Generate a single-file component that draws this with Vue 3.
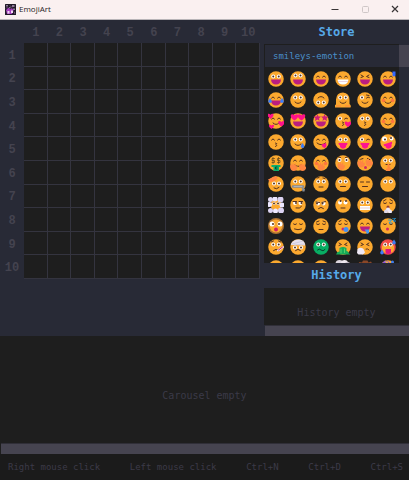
<script setup>
const lines = [1, 2, 3, 4, 5, 6, 7, 8, 9, 10]
const shortcuts = ['Right mouse click', 'Left mouse click', 'Ctrl+N', 'Ctrl+D', 'Ctrl+S']

// Every emoji is drawn on a 32 x 32 canvas from shared parts.
const stroke = (d, color = '#54311f', width = 2) =>
  `<path d="${d}" fill="none" stroke="${color}" stroke-width="${width}" stroke-linecap="round" stroke-linejoin="round"/>`
const fill = (d, color) => `<path d="${d}" fill="${color}"/>`
const dot = (x, y, r, color) => `<circle cx="${x}" cy="${y}" r="${r}" fill="${color}"/>`
const heart = (x, y, s, color = '#ff1289') =>
  `<path transform="translate(${x} ${y}) scale(${s})" d="M0 4C-9-2-4-7 0-3C4-7 9-2 0 4Z" fill="${color}"/>`
const eye = (x, y, px = x, py = y, r = 4) => dot(x, y, r, '#fff') + dot(px, py, 2, '#54311f')

const face = dot(16, 16, 15.5, '#fca92f')
const eyes = eye(10.5, 11) + eye(21.5, 11)
const happy = stroke('M7 12Q10 7 13 12M19 12Q22 7 25 12')
const closed = stroke('M7 12Q10 15 13 12M19 12Q22 15 25 12')
const squint = stroke('M8 8L13 11L8 13M24 8L19 11L24 13')
const flat = stroke('M7 12H13M19 12H25')
const wink = eye(10, 11) + stroke('M19 12Q22 8 25 11')
const grin = fill('M6 17H26Q25 27 16 27Q7 27 6 17Z', '#bb1d80')
const smile = stroke('M10 20Q16 26 22 20')
const kiss = stroke('M15 18Q20 19 16 21Q20 23 15 25')
const blush = dot(7, 17, 3.5, '#ff763f') + dot(25, 17, 3.5, '#ff763f')
const line = stroke('M11 21H21')
const frown = stroke('M11 23Q16 18 21 23')
const tongue = fill('M7 18H25Q24 23 22 23V26Q16 33 10 26V23Q7 22 7 18Z', '#ff148f')
const hand = (x, y) => `<path transform="translate(${x} ${y})" d="M0 0L2-5L4-1L6-7L8-1L11-6L12 1L15 0Q15 9 8 10Q0 10 0 0Z" fill="#ff8542"/>`
const tear = (x, y) => `<path transform="translate(${x} ${y})" d="M0-5Q7 4 0 5Q-7 4 0-5Z" fill="#3f7df4"/>`

const emojis = [
  { name: 'grinning', art: face + eyes + grin },
  { name: 'grinning big eyes', art: face + eye(11, 9) + eye(21, 9) + grin },
  { name: 'smiling eyes', art: face + happy + grin },
  { name: 'beaming', art: face + happy + fill('M5 17H27Q26 27 16 27Q6 27 5 17Z', '#fff') + stroke('M7 21H25', '#d5a6c2', 1) },
  { name: 'squinting', art: face + squint + grin },
  { name: 'sweat smile', art: face + happy + grin + fill('M25 1H31V9Q28 13 25 9Z', '#3469ff') },

  { name: 'tears of joy', art: face + happy + grin + tear(4, 17) + tear(28, 17) },
  { name: 'slight smile', art: face + eyes + smile },
  { name: 'upside down', art: face + eye(10.5, 21) + eye(21.5, 21) + stroke('M10 12Q16 6 22 12') },
  { name: 'melting', art: fill('M2 25V15Q3 1 16 1Q29 2 29 16V24Q33 27 31 31H0Q-2 27 2 25Z', '#fca92f') + stroke('M3 28H11M21 28H29', '#ff853c') + eyes + smile },
  { name: 'winking', art: face + wink + stroke('M19 6L24 7') + smile },
  { name: 'blushing', art: face + happy + blush + smile },

  { name: 'smiling hearts', art: face + happy + smile + heart(5, 7, 1.2) + heart(27, 22, 1.3) + heart(7, 28, 1) },
  { name: 'heart eyes', art: face + heart(9, 9, 1.5) + heart(23, 9, 1.5) + grin },
  { name: 'star struck', art: face + fill('M9 2L11 7L16 7L12 11L13 16L9 13L4 16L5 11L1 7L7 7Z M23 2L25 7L31 7L27 11L28 16L23 13L19 16L20 11L16 7L21 7Z', '#d01d79') + grin },
  { name: 'blowing a kiss', art: face + wink + kiss + heart(26, 23, 1.3) },
  { name: 'kissing', art: face + eyes + kiss },
  { name: 'smiling', art: face + happy + blush + stroke('M10 22Q16 27 22 22') },

  { name: 'kissing smiling eyes', art: face + happy + kiss },
  { name: 'smiling with tear', art: face + eyes + smile + tear(25, 23) },
  { name: 'savoring', art: face + happy + stroke('M8 18Q16 25 25 18') + fill('M17 21L26 18Q29 26 23 28Q18 27 17 21Z', '#ff148f') },
  { name: 'tongue', art: face + eyes + tongue },
  { name: 'winking tongue', art: face + wink + tongue },
  { name: 'zany', art: face + eye(9, 10, 10, 11, 5) + eye(23, 9, 22, 8, 4) + `<g transform="rotate(-18 16 20)">${tongue}</g>` },

  { name: 'money mouth', art: face + stroke('M13 7H8V11H13V15H8M10 5V17M24 7H19V11H24V15H19M21 5V17', '#684b1e', 1.5) + fill('M7 20H25V24H22V32H11V24H7Z', '#0eae6b') + stroke('M18 24H15V28H18', '#064f39') },
  { name: 'hugging', art: face + happy + smile + hand(0, 22) + hand(18, 22) },
  { name: 'hand over mouth', art: face + happy + blush + hand(9, 21) },
  { name: 'open eyes hand', art: face + eye(9, 10) + eye(23, 10) + hand(5, 20) + stroke('M7 4L11 5M21 5L25 4') },
  { name: 'peeking', art: face + stroke('M6 9L12 7M21 7L27 10') + hand(1, 15) + hand(17, 13) + dot(17, 25, 3, '#d12a62') },
  { name: 'shushing', art: face + eyes + stroke('M12 19H20') + fill('M15 18H19V24L23 27L20 32H12V27H15Z', '#ff853c') },

  { name: 'salute', art: face + eye(12, 15) + eye(22, 15) + stroke('M12 24Q17 28 22 23') + fill('M0 7L16 0L19 5L13 10L4 12Z', '#ff8542') },
  { name: 'zipper', art: face + eyes + stroke('M6 21H26', '#828996', 5) + stroke('M8 21H24', '#d8dce2', 1) + fill('M23 22L30 26L29 31H25Z', '#858c98') },
  { name: 'raised brow', art: face + eyes + stroke('M8 4L12 3M20 4L24 5') + stroke('M12 22H20') },
  { name: 'neutral', art: face + eyes + line },
  { name: 'expressionless', art: face + flat + line },
  { name: 'no mouth', art: face + eyes },

  { name: 'in clouds', art: dot(16, 16, 11, '#fca92f') + dot(5, 5, 5, '#e2daf5') + dot(14, 4, 5, '#eee8ff') + dot(25, 5, 6, '#ddd4f3') + dot(3, 15, 5, '#eee8ff') + dot(28, 16, 5, '#eee8ff') + dot(5, 27, 5, '#ddd4f3') + dot(15, 28, 5, '#eee8ff') + dot(26, 27, 6, '#ddd4f3') + eye(12, 13, 12, 13, 3) + eye(20, 13, 20, 13, 3) },
  { name: 'smirking', art: face + eye(10, 12, 12, 12) + eye(21, 12, 23, 12) + stroke('M6 9H13M18 9H25') + stroke('M12 22Q20 24 23 19') },
  { name: 'unamused', art: face + eye(10, 13, 8, 13) + eye(21, 13, 19, 13) + stroke('M6 10L13 11M18 11L25 9') + frown },
  { name: 'rolling eyes', art: face + eye(10, 11, 11, 8) + eye(21, 11, 22, 8) + stroke('M12 22H20') },
  { name: 'grimacing', art: face + eyes + fill('M6 18H26V26H6Z', '#fff') + stroke('M7 22H25', '#c799a0', 1) },
  { name: 'exhaling', art: face + stroke('M7 8L12 5M20 5L25 8') + closed + dot(16, 20, 3, '#943a2c') + dot(16, 25, 4, '#eee9fb') + dot(12, 29, 4, '#ddd9ec') + dot(20, 29, 4, '#eee9fb') },

  { name: 'shaking', art: dot(16, 16, 16, '#ac7132') + dot(16, 16, 13, '#fca92f') + eye(8, 12, 10, 12, 5) + eye(24, 12, 22, 12, 5) + dot(16, 23, 4, '#d21d66') },
  { name: 'relieved', art: face + closed + stroke('M9 22Q16 25 23 22') },
  { name: 'pensive', art: face + closed + stroke('M7 8L12 6M20 6L25 8') + stroke('M12 23H20') },
  { name: 'sleepy', art: face + closed + stroke('M8 7L12 5M20 5L24 7') + dot(16, 22, 3, '#d22767') + dot(22, 23, 5, '#438ff2') },
  { name: 'drooling', art: face + happy + grin + fill('M15 23H24V30Q19 34 18 27Z', '#4798ee') },
  { name: 'sleeping', art: face + closed + dot(15, 22, 3, '#d22767') + stroke('M17 4H23L18 10H24M25 0H31L26 6H32', '#289fe0', 2) },

  { name: 'thermometer', art: face + eyes + stroke('M6 6L11 4M21 4L26 6') + frown + stroke('M20 23L30 16', '#e8e4f0', 4) + stroke('M21 22L29 16', '#d52767', 2) },
  { name: 'bandage', art: face + eye(10, 17) + eye(22, 17) + frown + fill('M2 9Q8 0 19 1Q27 2 30 9V13L2 12Z', '#e7e2ef') + stroke('M4 10L27 4M8 12L29 10', '#bbb5c6', 1) },
  { name: 'nauseated', art: dot(16, 16, 15.5, '#08ad63') + eyes + stroke('M9 22Q13 18 16 22Q20 26 24 21', '#06432f') },
  { name: 'vomiting', art: face + squint + fill('M9 18Q16 14 23 18V24Q27 24 27 28L31 31H2L5 26L9 25Z', '#16ad58') + stroke('M12 20V28M19 20V27', '#57d06b') },
  { name: 'sneezing', art: face + squint + stroke('M18 20Q22 18 24 22') + fill('M1 20Q7 15 13 20L16 27L12 31H3L0 28Z', '#efe9f5') },
  { name: 'hot', art: dot(16, 16, 15.5, '#f24b48') + fill('M4 13H28V19Q28 28 16 29Q4 28 4 19Z', '#fca92f') + eyes + fill('M11 20H22V27Q16 33 11 27Z', '#e0137e') + tear(28, 6) + tear(4, 26) },

  { name: 'cold', art: face + eyes },
  { name: 'woozy', art: face + eyes },
  { name: 'dizzy', art: face + eyes },
  { name: 'exploding', art: dot(9, 8, 8, '#ddd6df') + dot(19, 7, 7, '#eee8ef') + dot(25, 10, 6, '#c9bfca') },
  { name: 'cowboy', art: fill('M0 10L5 4L10 5L12 1H21L23 5L28 3L32 10Z', '#8a4728') },
  { name: 'partying', art: face + fill('M0 10L10 1L19 4L16 12Z', '#8652df') + fill('M9 2L17 4L14 8Z', '#eeb642') + dot(25, 4, 3, '#3d7bec') }
]
</script>

<template>
  <div class="window">
    <header class="titlebar">
      <svg class="logo" viewBox="0 0 22 22" aria-hidden="true">
        <rect width="22" height="22" rx="1" fill="#201a26" />
        <path d="M2 2H6V5H2ZM14 2H19V6H14ZM8 6H11V9H8ZM16 9H20V12H16Z" fill="#8d7895" />
        <path d="M2 12L7 7L10 11L14 8L17 13L14 20H4Z" fill="#a63fc0" />
        <path d="M5 14H9V19H5ZM12 13H16V18H12Z" fill="#f1d7f3" />
        <path d="M10 3L14 7M2 9L5 6M18 15L20 20" stroke="#c48acb" stroke-width="1" />
      </svg>
      <span class="title">EmojiArt</span>
      <button class="control" aria-label="Minimize">
        <svg viewBox="0 0 8 8"><path d="M0.500 4.500H7.500" stroke="#383435" /></svg>
      </button>
      <button class="control" aria-label="Maximize" disabled>
        <svg viewBox="0 0 8 8"><rect x="1.500" y="1.500" width="6" height="6" rx="1" fill="none" stroke="#cfc7c7" /></svg>
      </button>
      <button class="control" aria-label="Close">
        <svg viewBox="0 0 8 8"><path d="M1 1L7 7M7 1L1 7" stroke="#383435" stroke-width="1.2" /></svg>
      </button>
    </header>

    <main class="workspace">
      <section class="board">
        <span class="corner"></span>
        <span v-for="col in lines" :key="col" class="label">{{ col }}</span>
        <template v-for="row in lines" :key="row">
          <span class="label">{{ row }}</span>
          <button v-for="col in lines" :key="col" class="cell" :aria-label="`Row ${row}, column ${col}`"></button>
        </template>
      </section>

      <aside class="side">
        <h2 class="heading">Store</h2>
        <div class="store">
          <div class="catalog">
            <h3 class="category">smileys-emotion</h3>
            <div class="emojis">
              <button v-for="emoji in emojis" :key="emoji.name" class="emoji" :aria-label="emoji.name">
                <svg viewBox="0 0 32 32"><g v-html="emoji.art"></g></svg>
              </button>
            </div>
          </div>
          <div class="track"><div class="thumb"></div></div>
        </div>
        <h2 class="heading history-heading">History</h2>
        <div class="history">
          <p class="empty">History empty</p>
        </div>
        <div class="bar"></div>
      </aside>
    </main>

    <section class="carousel">
      <p class="empty">Carousel empty</p>
    </section>
    <div class="bar"></div>

    <footer class="footer">
      <span v-for="shortcut in shortcuts" :key="shortcut">{{ shortcut }}</span>
    </footer>
  </div>
</template>

<style>
body {
  margin: 0;
  background: #1e1e1e;
}
</style>

<style scoped>
.window {
  display: flex;
  flex-direction: column;
  min-height: 100vh;
  background: #1e1e1e;
  color: #3b3a48;
  font-family: "DejaVu Sans Mono", "Liberation Mono", monospace;
}
button {
  padding: 0;
  border: 0;
  background: none;
}
h2,
h3,
p {
  margin: 0;
}
svg {
  display: block;
}
.titlebar {
  display: flex;
  align-items: center;
  box-sizing: border-box;
  height: 20px;
  padding: 0 3px 1px 5px;
  border-bottom: 1px solid #b9b5b8;
  background: #faf0f0;
}
.logo {
  width: 11px;
  height: 11px;
}
.title {
  flex: 1;
  margin-left: 3px;
  color: #262324;
  font: 8px/12px "Open Sans", sans-serif;
}
.control {
  display: grid;
  place-items: center;
  width: 22px;
  height: 18px;
  margin-left: 8px;
}
.control svg {
  width: 8px;
  height: 8px;
}
.workspace {
  display: grid;
  grid-template-columns: minmax(0, 1fr) 145px;
  background: #282a36;
}
.board {
  display: grid;
  grid-template-columns: 24px repeat(10, minmax(0, 1fr));
  grid-template-rows: 23px;
  align-content: start;
  padding-right: 4px;
}
.label {
  display: grid;
  place-items: center;
  padding-top: 2px;
  color: #44434f;
  font: bold 12px/14px "Liberation Mono", monospace;
}
.cell {
  aspect-ratio: 1;
  border-right: 1px solid #34343f;
  border-bottom: 1px solid #34343f;
  background: #1e1e1e;
}
.side {
  display: flex;
  flex-direction: column;
}
.heading {
  height: 24px;
  color: #56a9e8;
  font-size: 12px;
  line-height: 24px;
  text-align: center;
}
.history-heading {
  height: 25px;
}
.store {
  display: flex;
  height: 219px;
}
.catalog {
  flex: 1;
  overflow: hidden;
  border-left: 1px solid #1e1e1e;
  background: #1e1e1e;
}
.category {
  height: 22px;
  margin-top: 1px;
  padding-left: 8px;
  background: #282a36;
  color: #4a8fc9;
  font-size: 9px;
  font-weight: normal;
  line-height: 22px;
}
.emojis {
  display: grid;
  grid-template-columns: repeat(6, 1fr);
  grid-auto-rows: 21px;
  padding-top: 1px;
}
.emoji {
  display: grid;
  place-items: center;
}
.emoji svg {
  width: 16px;
  height: 16px;
}
.track {
  width: 10px;
  padding-top: 1px;
}
.thumb {
  height: 22px;
  background: #464450;
}
.history,
.carousel {
  display: grid;
  place-items: center;
  background: #1e1e1e;
}
.history {
  height: 37px;
  padding-top: 0;
}
.history .empty {
  padding-top: 12px;
}
.carousel {
  flex: 1;
  padding-top: 12px;
}
.empty {
  font-size: 10px;
  line-height: 12px;
}
.bar {
  height: 10px;
  margin-left: 1px;
  border-top: 1px solid #302f38;
  background: #464450;
}
.footer {
  display: flex;
  align-items: center;
  justify-content: space-between;
  box-sizing: border-box;
  height: 26px;
  padding: 0 6px 0 8px;
  background: #1b1b1b;
  font-size: 9px;
  line-height: 12px;
  white-space: nowrap;
}
</style>
